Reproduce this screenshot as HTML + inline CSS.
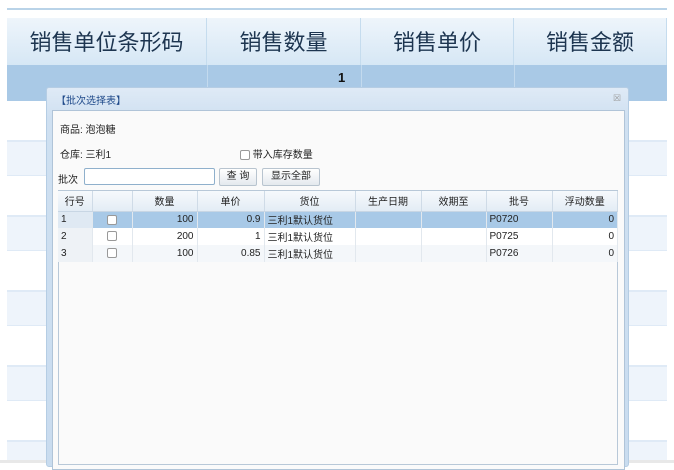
<!DOCTYPE html>
<html><head><meta charset="utf-8"><style>
*{margin:0;padding:0;box-sizing:border-box}
body{width:674px;height:463px;background:#fff;position:relative;overflow:hidden;font-family:"Liberation Sans","Noto Sans CJK SC",sans-serif;}
.a{position:absolute}
.hd{top:18px;height:47px;background:linear-gradient(#eef5fb,#d6e7f5);border-right:1px solid #c5dcee;font-size:22px;color:#1d3550;text-align:center;line-height:50px}
.s{font-size:10px;color:#222}
table{border-collapse:collapse;font-size:10px;color:#222}
td{height:17px;border-right:1px solid #e2e8ee;padding:0 3px;white-space:nowrap}
th{height:20px;font-weight:normal;background:linear-gradient(#f6f9fc,#e3ecf5);border-right:1px solid #cfdbe7;border-bottom:1px solid #c8d6e4}
.cb{display:inline-block;width:10px;height:10px;border:1px solid #999;background:#fff;border-radius:2px;vertical-align:middle}
</style></head><body>
<div class="a" style="left:7px;top:8px;width:660px;height:2px;background:#b9d3e8"></div>
<div class="a hd" style="left:7px;width:200px">销售单位条形码</div>
<div class="a hd" style="left:207px;width:154px">销售数量</div>
<div class="a hd" style="left:361px;width:153px">销售单价</div>
<div class="a hd" style="left:514px;width:153px">销售金额</div>
<div class="a" style="left:7px;top:65px;width:660px;height:36px;background:#a9c9e6"></div>
<div class="a" style="left:207px;top:65px;width:1px;height:36px;background:#c3daee"></div>
<div class="a" style="left:361px;top:65px;width:1px;height:36px;background:#c3daee"></div>
<div class="a" style="left:514px;top:65px;width:1px;height:36px;background:#c3daee"></div>
<div class="a" style="left:338px;top:70px;font-size:13px;font-weight:bold;color:#111">1</div>
<div class="a" style="left:7px;top:101px;width:660px;height:359px;background:repeating-linear-gradient(#fff 0 39px,#dfeaf6 39px 41px,#eef4fb 41px 74px,#dfeaf6 74px 75px)"></div>
<div class="a" style="left:0;top:460px;width:674px;height:3px;background:#e8e8e8"></div>
<div class="a" style="left:46px;top:87px;width:583px;height:380px;background:linear-gradient(#dfeaf6,#cfe0f1 30px,#c9dcef);border:1px solid #b5cde4;border-radius:3px"></div>
<div class="a" style="left:56px;top:92px;font-size:10px;color:#1f4a8a">【批次选择表】</div>
<div class="a" style="left:613px;top:93px;font-size:9px;color:#999">☒</div>
<div class="a" style="left:52px;top:110px;width:573px;height:360px;background:#fafafa;border:1px solid #b0c4d8"></div>
<div class="a s" style="left:60px;top:121px">商品: 泡泡糖</div>
<div class="a s" style="left:60px;top:146px">仓库: 三利1</div>
<div class="a s" style="left:240px;top:146px"><span class="cb"></span> 带入库存数量</div>
<div class="a s" style="left:58px;top:171px">批次</div>
<div class="a" style="left:84px;top:168px;width:131px;height:17px;border:1px solid #8fb0cc;background:#fff;border-radius:2px"></div>
<div class="a s" style="left:219px;top:168px;width:38px;height:18px;border:1px solid #b8c4cf;background:linear-gradient(#fff,#e4e9ee);text-align:center;line-height:16px;border-radius:2px">查 询</div>
<div class="a s" style="left:262px;top:168px;width:58px;height:18px;border:1px solid #b8c4cf;background:linear-gradient(#fff,#e4e9ee);text-align:center;line-height:16px;border-radius:2px">显示全部</div>
<div class="a" style="left:58px;top:190px;width:560px;height:275px;background:#fafafa;border:1px solid #b8c8d8"></div>
<table class="a" style="left:58px;top:191px;width:560px">
<tr><th style="width:34px">行号</th><th style="width:40px"></th><th style="width:65px">数量</th><th style="width:67px">单价</th><th style="width:91px">货位</th><th style="width:66px">生产日期</th><th style="width:65px">效期至</th><th style="width:66px">批号</th><th>浮动数量</th></tr>
<tr style="background:#a8c9e7"><td style="background:#dfe9f3">1</td><td style="text-align:center"><span class="cb"></span></td><td align="right">100</td><td align="right">0.9</td><td>三利1默认货位</td><td></td><td></td><td>P0720</td><td align="right">0</td></tr>
<tr style="background:#fff"><td style="background:#eef2f6">2</td><td style="text-align:center"><span class="cb"></span></td><td align="right">200</td><td align="right">1</td><td>三利1默认货位</td><td></td><td></td><td>P0725</td><td align="right">0</td></tr>
<tr style="background:#f4f7fa"><td style="background:#eef2f6">3</td><td style="text-align:center"><span class="cb"></span></td><td align="right">100</td><td align="right">0.85</td><td>三利1默认货位</td><td></td><td></td><td>P0726</td><td align="right">0</td></tr>
</table>
</body></html>
